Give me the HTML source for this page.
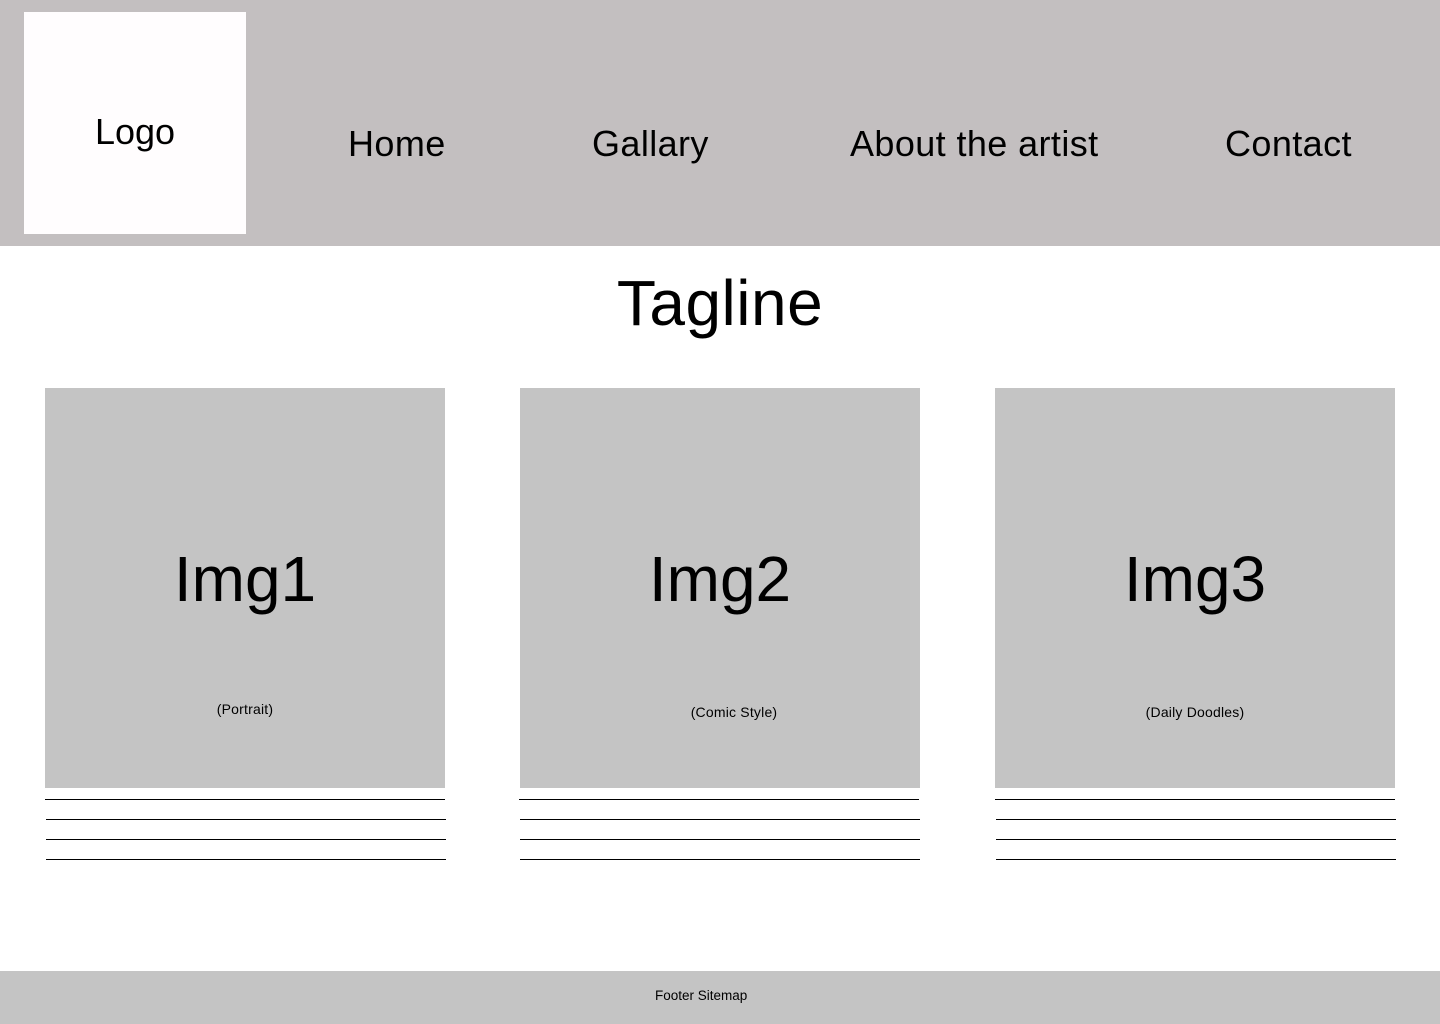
<!DOCTYPE html>
<html><head><meta charset="utf-8"><style>
*{margin:0;padding:0;box-sizing:border-box}
body{width:1440px;height:1024px;position:relative;background:#fff;font-family:"Liberation Sans",Arial,sans-serif;color:#000;overflow:hidden}
.a{position:absolute;white-space:nowrap}
.hdr{left:0;top:0;width:1440px;height:246px;background:#C3BFC0}
.logo{left:24px;top:12px;width:222px;height:222px;background:#FFFDFE}
.nav{font-size:36px;top:122px;line-height:44px;letter-spacing:0.4px}
.card{top:388px;width:400px;height:400px;background:#C4C4C4}
.big{font-size:64px;line-height:74px;text-align:center;width:400px}
.sm{font-size:14px;line-height:16px;text-align:center;letter-spacing:0.2px}
.ln{height:1px;background:#000;width:400px}
</style></head><body>
<div class="a hdr"></div>
<div class="a logo"></div>
<div class="a" style="left:24px;top:110px;width:222px;text-align:center;font-size:36px;line-height:44px">Logo</div>
<div class="a nav" style="left:348px">Home</div>
<div class="a nav" style="left:592px">Gallary</div>
<div class="a nav" style="left:850px">About the artist</div>
<div class="a nav" style="left:1225px">Contact</div>
<div class="a" style="left:0;top:266px;width:1440px;text-align:center;font-size:64px;line-height:74px;letter-spacing:0.5px">Tagline</div>

<div class="a card" style="left:45px"></div>
<div class="a card" style="left:520px"></div>
<div class="a card" style="left:995px"></div>
<div class="a big" style="left:45px;top:542px">Img1</div>
<div class="a big" style="left:520px;top:542px">Img2</div>
<div class="a big" style="left:995px;top:542px">Img3</div>
<div class="a sm" style="left:45px;top:701px;width:400px">(Portrait)</div>
<div class="a sm" style="left:534px;top:704px;width:400px">(Comic Style)</div>
<div class="a sm" style="left:995px;top:704px;width:400px">(Daily Doodles)</div>

<div class="a ln" style="left:45px;top:799px"></div>
<div class="a ln" style="left:46px;top:819px"></div>
<div class="a ln" style="left:46px;top:839px"></div>
<div class="a ln" style="left:46px;top:859px"></div>
<div class="a ln" style="left:519px;top:799px"></div>
<div class="a ln" style="left:520px;top:819px"></div>
<div class="a ln" style="left:520px;top:839px"></div>
<div class="a ln" style="left:520px;top:859px"></div>
<div class="a ln" style="left:995px;top:799px"></div>
<div class="a ln" style="left:996px;top:819px"></div>
<div class="a ln" style="left:996px;top:839px"></div>
<div class="a ln" style="left:996px;top:859px"></div>

<div class="a" style="left:0;top:971px;width:1440px;height:53px;background:#C4C4C4"></div>
<div class="a" style="left:655px;top:988px;font-size:13.5px;line-height:16px">Footer Sitemap</div>
</body></html>
